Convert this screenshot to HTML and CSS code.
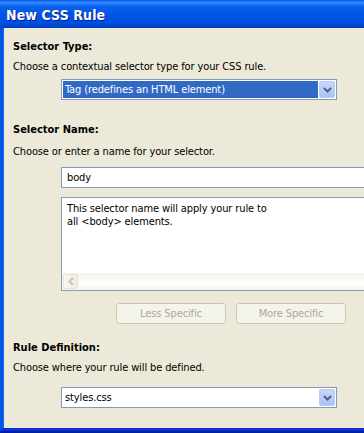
FILE: index.html
```html
<!DOCTYPE html>
<html>
<head>
<meta charset="utf-8">
<link rel="stylesheet" href="styles.css">
</head>
<body>
<div class="window">
  <div class="titlebar"><span class="title">New CSS Rule</span></div>
  <div class="client">
    <div class="heading first">Selector Type:</div>
    <div class="desc">Choose a contextual selector type for your CSS rule.</div>
    <div class="combo sel-type">
      <div class="combo-value selected">Tag (redefines an HTML element)</div>
      <div class="drop-btn"><svg width="9" height="6" viewBox="0 0 9 6"><path d="M1 1 L4.5 4.5 L8 1" fill="none" stroke="#4d6185" stroke-width="2"/></svg></div>
    </div>

    <div class="heading name-h">Selector Name:</div>
    <div class="desc">Choose or enter a name for your selector.</div>
    <div class="textbox">body</div>
    <div class="memo">
      <div class="memo-text">This selector name will apply your rule to<br>all &lt;body&gt; elements.</div>
      <div class="hscroll">
        <div class="arrow-btn"><svg width="6" height="9" viewBox="0 0 6 9"><path d="M5 1 L1.5 4.5 L5 8" fill="none" stroke="#c8c6ba" stroke-width="2"/></svg></div>
        <div class="track"></div>
      </div>
    </div>
    <div class="buttons">
      <div class="btn">Less Specific</div>
      <div class="btn">More Specific</div>
    </div>

    <div class="heading rule-h">Rule Definition:</div>
    <div class="desc">Choose where your rule will be defined.</div>
    <div class="combo sel-file">
      <div class="combo-value">styles.css</div>
      <div class="drop-btn"><svg width="9" height="6" viewBox="0 0 9 6"><path d="M1 1 L4.5 4.5 L8 1" fill="none" stroke="#4d6185" stroke-width="2"/></svg></div>
    </div>
  </div>
  <div class="bottom-shade"></div>
</div>
</body>
</html>
```

FILE: styles.css
```css
html, body {
  margin: 0;
  padding: 0;
  background: #d4d0c8;
}
.window {
  width: 364px;
  height: 433px;
  display: flex;
  flex-direction: column;
  overflow: hidden;
  font-family: "DejaVu Sans", "Liberation Sans", sans-serif;
  font-stretch: condensed;
  font-size: 11px;
  letter-spacing: -0.12px;
  color: #000;
}
.titlebar {
  height: 28px;
  flex: none;
  background: linear-gradient(to bottom, #0058ee 0%, #3a8cff 10%, #0a62ef 22%, #0055e5 50%, #0050e0 80%, #0046d0 92%, #003bb8 100%);
  display: flex;
  align-items: center;
  padding-left: 6px;
  box-sizing: border-box;
}
.title {
  color: #fff;
  font-family: "DejaVu Sans", sans-serif;
  font-stretch: condensed;
  font-weight: bold;
  font-size: 14px;
  letter-spacing: 0.1px;
  text-shadow: 1px 1px 0 #0a1883;
  padding-top: 1px;
}
.client {
  flex: 1;
  background: #ece9d8;
  border-left: 3px solid #0055e5;
  border-bottom: 3px solid #0831d9;
  box-shadow: inset 1px 0 0 #166aee;
  padding-left: 10px;
  overflow: hidden;
  display: flex;
  flex-direction: column;
  align-items: flex-start;
}
.bottom-shade {
  height: 2px;
  flex: none;
  background: #001ea0;
}
.heading {
  font-weight: bold;
  letter-spacing: 0;
  line-height: 14px;
  height: 14px;
}
.first { margin-top: 12px; }
.name-h { margin-top: 23px; }
.rule-h { margin-top: 17px; }
.desc {
  line-height: 14px;
  height: 14px;
  margin-top: 6px;
}
.name-h + .desc { margin-top: 8px; }
.combo {
  margin-left: 48px;
  width: 276px;
  height: 21px;
  box-sizing: border-box;
  border: 1px solid #7f9db9;
  background: #fff;
  display: flex;
  align-items: stretch;
  padding: 1px;
  gap: 1px;
}
.sel-type { margin-top: 5px; }
.sel-file { margin-top: 12px; }
.combo-value {
  flex: 1;
  display: flex;
  align-items: center;
  padding-left: 2px;
  line-height: 13px;
}
.combo-value.selected {
  background: #316ac5;
  color: #fff;
}
.drop-btn {
  width: 16px;
  flex: none;
  box-sizing: border-box;
  border: 1px solid #b9cbf3;
  border-radius: 2px;
  background: linear-gradient(to bottom, #c6d6fc 0%, #b8cbf8 60%, #aac0f4 100%);
  display: flex;
  align-items: center;
  justify-content: center;
}
.textbox {
  margin-top: 8px;
  margin-left: 48px;
  width: 320px;
  height: 21px;
  box-sizing: border-box;
  border: 1px solid #7f9db9;
  background: #fff;
  padding-left: 5px;
  display: flex;
  align-items: center;
  flex: none;
}
.memo {
  margin-top: 9px;
  margin-left: 48px;
  width: 320px;
  height: 94px;
  flex: none;
  box-sizing: border-box;
  border: 1px solid #7f9db9;
  background: #fff;
  display: flex;
  flex-direction: column;
}
.memo-text {
  flex: 1;
  padding: 4px 0 0 5px;
  line-height: 13px;
}
.hscroll {
  height: 17px;
  display: flex;
  background: linear-gradient(to bottom, #f3f1ec 0%, #fefefb 60%, #f6f5ef 100%);
  padding: 1px;
  box-sizing: border-box;
}
.arrow-btn {
  width: 15px;
  box-sizing: border-box;
  border: 1px solid #e6e4d8;
  border-radius: 2px;
  background: linear-gradient(to right, #f8f7f2, #efede3);
  display: flex;
  align-items: center;
  justify-content: center;
}
.track { flex: 1; }
.buttons {
  margin-top: 12px;
  margin-left: 103px;
  display: flex;
  gap: 10px;
}
.btn {
  width: 110px;
  height: 21px;
  box-sizing: border-box;
  border: 1px solid #c9c7ba;
  border-radius: 3px;
  background: #f5f4ea;
  color: #aca899;
  display: flex;
  align-items: center;
  justify-content: center;
}
```
